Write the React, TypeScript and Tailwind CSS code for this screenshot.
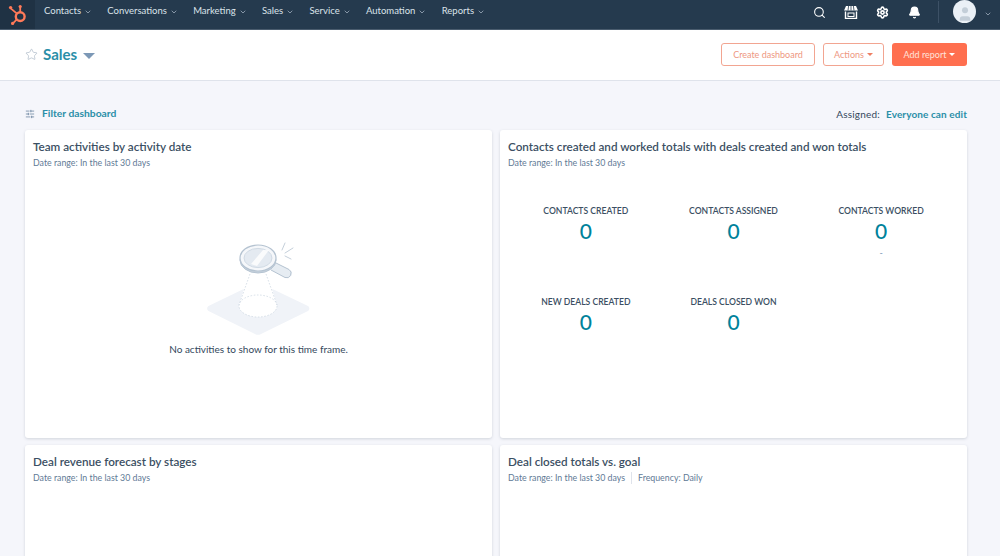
import { ChevronDown, Search, Settings, Star, Bell, User, SlidersHorizontal } from 'lucide-react'

const NAV_ITEMS = ['Contacts', 'Conversations', 'Marketing', 'Sales', 'Service', 'Automation', 'Reports']

const METRICS = [
  { label: 'CONTACTS CREATED', value: '0' },
  { label: 'CONTACTS ASSIGNED', value: '0' },
  { label: 'CONTACTS WORKED', value: '0', note: '-' },
  { label: 'NEW DEALS CREATED', value: '0' },
  { label: 'DEALS CLOSED WON', value: '0' },
]

function SprocketLogo() {
  return (
    <svg width="20" height="22" viewBox="0 0 20 22" fill="none">
      <circle cx="12.2" cy="12.6" r="4.4" stroke="#ff7a59" strokeWidth="2.4" />
      <path d="M12.2 8V3.6M9 9.6 3 4.6M8.6 15.6l-3.2 3.2" stroke="#ff7a59" strokeWidth="1.8" />
      <circle cx="12.2" cy="2.6" r="1.6" fill="#ff7a59" />
      <circle cx="2.6" cy="3.6" r="1.7" fill="#ff7a59" />
      <circle cx="4.6" cy="19.4" r="1.6" fill="#ff7a59" />
    </svg>
  )
}

function MarketplaceIcon() {
  return (
    <svg width="14" height="13" viewBox="0 0 14 13" fill="none" className="mr-[18px]">
      <path d="M2 0h10l2 4.5H0z" fill="#fff" />
      <path d="M4.6 0 4 4.5M7 0v4.5M9.4 0l.6 4.5" stroke="#253a4e" strokeWidth="0.8" />
      <path d="M1.5 5.5V12.5H12.5V5.5" stroke="#fff" strokeWidth="1.4" />
      <rect x="4" y="7" width="6" height="3.5" stroke="#fff" strokeWidth="1" />
    </svg>
  )
}

function EmptyIllustration() {
  return (
    <svg width="110" height="96" viewBox="0 0 110 96" fill="none" className="ml-[3px]">
      <path d="M49 44 3.5 66a3 3 0 0 0 0 5L50 94a6 6 0 0 0 6 0l47-23a3 3 0 0 0 0-5L57 44a8 8 0 0 0-8 0z" fill="#f0f3f8" />
      <path d="M44 32 34 65c4 16 34 16 38 0L62 32z" fill="#fff" />
      <ellipse cx="53" cy="66" rx="19" ry="11" fill="#fff" stroke="#c9d4df" strokeWidth="0.7" strokeDasharray="1.6 1.6" />
      <path d="M45 34 34 65M61 34l11 31" stroke="#c9d4df" strokeWidth="0.7" strokeDasharray="1.6 1.6" />
      <path d="M66 25 83 33.5" stroke="#eef2f6" strokeWidth="8" strokeLinecap="round" />
      <path d="m70 22.5 14 7a4.5 4.5 0 0 1-4 8L66 30" stroke="#b5c3d1" strokeWidth="1" fill="#e6ecf2" />
      <ellipse cx="53" cy="20" rx="18" ry="13" fill="#c9d4df" stroke="#b5c3d1" strokeWidth="1" />
      <ellipse cx="53" cy="18" rx="18" ry="13" fill="#f5f7fa" stroke="#b5c3d1" strokeWidth="1.2" />
      <ellipse cx="53" cy="18" rx="14" ry="9.6" fill="#e4eaf1" stroke="#c9d4df" strokeWidth="0.8" />
      <path d="m46 24 12-14h6L52 26z" fill="#fff" fillOpacity="0.8" />
      <path d="m80 3-3 7M88 8l-8 5M86 19l-6-3" stroke="#b5c3d1" strokeWidth="0.8" strokeLinecap="round" />
    </svg>
  )
}

function CardHeader({ title, frequency }: { title: string; frequency?: string }) {
  return (
    <div>
      <h2 className="text-[11.7px] leading-[16px] font-semibold text-[#3b4f63]">{title}</h2>
      <div className="mt-[3px] flex items-center text-[8.8px] leading-[12px] text-[#5f7a96]">
        <span>Date range: In the last 30 days</span>
        {frequency && <span className="ml-[6px] border-l border-[#dfe3eb] pl-[6px]">Frequency: {frequency}</span>}
      </div>
    </div>
  )
}

function Metric({ label, value, note }: { label: string; value: string; note?: string }) {
  return (
    <div className="flex h-[91px] flex-col items-center">
      <div className="text-[8.6px] leading-[12px] font-semibold whitespace-nowrap text-[#3b4f63]">{label}</div>
      <div className="text-[21px] leading-[27px] font-medium text-[#00829b]">{value}</div>
      {note && <div className="mt-[3px] text-[9px] leading-[12px] text-[#7c98b6]">{note}</div>}
    </div>
  )
}

export default function App() {
  return (
    <div className="flex h-[556px] w-[1000px] flex-col overflow-hidden bg-[#f5f6fb] font-['Lato','Liberation_Sans',sans-serif]">
      <nav className="flex h-[30px] shrink-0 items-start border-b border-[#4a5c6e] bg-[#253a4e]">
        <div className="flex h-full w-[35px] items-center justify-center bg-[#1f3244]">
          <SprocketLogo />
        </div>
        <ul className="ml-[9px] flex items-center gap-[15.3px]">
          {NAV_ITEMS.map((item) => (
            <li key={item} className="flex items-center gap-[3px] text-[9.5px] leading-[22px] text-[#dbe3ea]">
              {item}
              <ChevronDown size={8} strokeWidth={2} className="mt-[1px] text-[#b8c6d4]" />
            </li>
          ))}
        </ul>
        <div className="ml-auto flex h-[24px] items-center text-white">
          <Search size={13} strokeWidth={2} className="mr-[18px]" />
          <MarketplaceIcon />
          <Settings size={13} strokeWidth={3} className="mr-[19px]" />
          <Bell size={13} strokeWidth={2} fill="#fff" className="mr-[17px]" />
          <div className="mr-[14px] h-[22px] w-px bg-[#3d5166]" />
          <div className="mb-[2px] flex h-[23px] w-[23px] items-end justify-center overflow-hidden rounded-full bg-[#eaf0f6]">
            <User size={18} strokeWidth={0} fill="#c3ced8" />
          </div>
          <ChevronDown size={8} strokeWidth={2} className="mt-[3px] mr-[8px] ml-[8px] text-[#b8c6d4]" />
        </div>
      </nav>

      <header className="flex h-[51px] shrink-0 items-center border-b border-[#dfe3eb] bg-white pr-[33px] pb-[1px] pl-[25px]">
        <Star size={13} strokeWidth={1.2} className="mr-[5px] text-[#a5b3c2]" />
        <h1 className="pb-[2px] text-[15px] leading-[20px] font-bold text-[#2b8fa8]">Sales</h1>
        <span className="mt-[3px] ml-[6px] h-0 w-0 border-x-[6px] border-t-[6px] border-x-transparent border-t-[#7c98b6]" />
        <div className="ml-auto flex items-center gap-[8px] text-[9px]">
          <button type="button" className="h-[23px] w-[94px] rounded-[3px] border border-[#f2a591] bg-white text-[#ee9781]">
            Create dashboard
          </button>
          <button type="button" className="flex h-[23px] w-[61px] items-center justify-center gap-[3px] rounded-[3px] border border-[#f2a591] bg-white text-[#ee9781]">
            Actions
            <span className="h-0 w-0 border-x-[3px] border-t-[3px] border-x-transparent border-t-[#ee7f63]" />
          </button>
          <button type="button" className="flex h-[23px] w-[75px] items-center justify-center gap-[3px] rounded-[3px] bg-[#ff6f4f] text-[#ffe3da]">
            Add report
            <span className="h-0 w-0 border-x-[3px] border-t-[3px] border-x-transparent border-t-white" />
          </button>
        </div>
      </header>

      <main className="pr-[33px] pl-[25px]">
        <div className="mt-[25px] flex h-[16px] items-center text-[10.3px] font-bold">
          <SlidersHorizontal size={10} strokeWidth={1.6} className="mr-[7px] text-[#516f90]" />
          <span className="text-[#2b8fa8]">Filter dashboard</span>
          <span className="ml-auto text-[10px] font-normal tracking-[0.2px] text-[#33475b]">Assigned:</span>
          <span className="ml-[6px] text-[10px] tracking-[0.1px] text-[#2b8fa8]">Everyone can edit</span>
        </div>

        <div className="mt-[8px] grid grid-cols-2 gap-x-[8px] gap-y-[7px]">
          <section className="h-[308px] rounded-[3px] bg-white px-[8px] pt-[8px] shadow-[0_1px_3px_rgba(45,62,80,0.18)]">
            <CardHeader title="Team activities by activity date" />
            <div className="mt-[71px] flex flex-col items-center">
              <EmptyIllustration />
              <p className="mt-[6px] text-[10px] leading-[14px] text-[#33475b]">No activities to show for this time frame.</p>
            </div>
          </section>
          <section className="h-[308px] rounded-[3px] bg-white px-[8px] pt-[8px] shadow-[0_1px_3px_rgba(45,62,80,0.18)]">
            <CardHeader title="Contacts created and worked totals with deals created and won totals" />
            <div className="mt-[36px] grid grid-cols-3 px-[4px]">
              {METRICS.map((metric) => (
                <Metric key={metric.label} {...metric} />
              ))}
            </div>
          </section>
          <section className="h-[200px] rounded-[3px] bg-white px-[8px] pt-[8px] shadow-[0_1px_3px_rgba(45,62,80,0.18)]">
            <CardHeader title="Deal revenue forecast by stages" />
          </section>
          <section className="h-[200px] rounded-[3px] bg-white px-[8px] pt-[8px] shadow-[0_1px_3px_rgba(45,62,80,0.18)]">
            <CardHeader title="Deal closed totals vs. goal" frequency="Daily" />
          </section>
        </div>
      </main>
    </div>
  )
}
